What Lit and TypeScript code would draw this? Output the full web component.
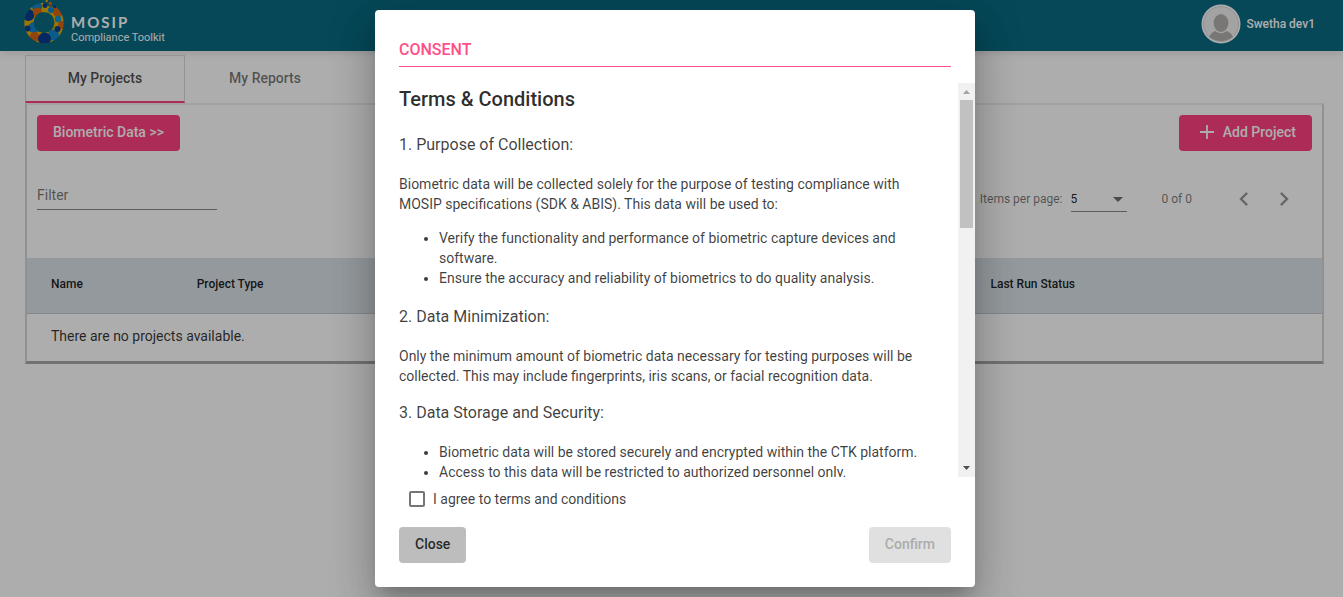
import { LitElement, html, css, svg } from "lit";
import { customElement, state } from "lit/decorators.js";

@customElement("mosip-logo")
class MosipLogo extends LitElement {
  static styles = css`
    :host { display: block; }
    svg { display: block; }
  `;
  render() {
    const blobs: [number, number, number, string][] = [
      [13, 6.5, 5, "#0f86cc"],
      [4.5, 15, 6, "#0b3d91"],
      [13.5, 12, 4.5, "#d9650f"],
      [34, 12, 5, "#d9650f"],
      [38, 25, 4, "#d9650f"],
      [34, 19, 3.2, "#0f95d6"],
      [27, 10, 3, "#0f86cc"],
      [10, 27.5, 5.5, "#0f86cc"],
      [3.5, 28.5, 3, "#0b3d91"],
      [10.5, 37, 5, "#d9650f"],
      [29.5, 35, 5.5, "#0f86cc"],
      [33.5, 29, 3, "#0b3d91"],
      [20.5, 39, 6.5, "#0b3d91"],
    ];
    const sparks: [number, number, number, string][] = [
      [21, 5.7, 2.4, "#0b3d91"],
      [26.3, 3.6, 1.8, "#d9650f"],
      [22.7, 1, 1.2, "#e6b000"],
      [30.5, 6.7, 1.6, "#0b3d91"],
    ];
    const dot = ([x, y, r, c]: [number, number, number, string]) =>
      svg`<circle cx=${x} cy=${y} r=${r} fill=${c}></circle>`;
    return html`<svg width="42" height="46" viewBox="0 0 42 46" aria-hidden="true">
      <defs>
        <mask id="ring">
          <ellipse cx="20" cy="23" rx="19.7" ry="20.3" fill="#fff"></ellipse>
          <circle cx="20" cy="22.500" r="10.500" fill="#000"></circle>
          <path d="M18 0h14v3l-4 4-4-1-4-2z" fill="#000"></path>
        </mask>
      </defs>
      <g mask="url(#ring)">
        <rect width="42" height="46" fill="#e6b000"></rect>
        ${blobs.map(dot)}
      </g>
      ${sparks.map(dot)}
    </svg>`;
  }
}

@customElement("app-root")
class AppRoot extends LitElement {
  @state() private agreed = false;

  static styles = css`
    :host {
      display: block;
      min-height: 100vh;
      position: relative;
      background: #fff;
      font-family: Roboto, sans-serif;
      font-size: 14px;
      color: rgba(0, 0, 0, 0.87);
    }
    * { box-sizing: border-box; }
    button, input, select { font-family: inherit; }
    header {
      display: flex;
      justify-content: space-between;
      height: 51px;
      padding: 0 28px 0 24px;
      background: #0a6a82;
      color: #fff;
      box-shadow: 0 2px 8px rgba(0, 0, 0, 0.12);
    }
    .brand { display: flex; gap: 5px; }
    .brand-text { padding-top: 14px; }
    .brand-name { font: 700 15px/17px Lato, sans-serif; letter-spacing: 2px; }
    .brand-sub { font-size: 11px; line-height: 14px; }
    .user { display: flex; align-items: center; gap: 5px; height: 48px; font-size: 12px; font-weight: 500; }
    .user svg { display: block; }
    main { padding: 4px 19px 0 25px; }
    .tabs { display: flex; height: 48px; }
    .tab {
      width: 160px;
      border: 1px solid transparent;
      border-bottom: 2px solid transparent;
      background: none;
      padding: 0 0 2px;
      font-size: 14px;
      font-weight: 500;
      color: rgba(0, 0, 0, 0.54);
    }
    .tab.active { border-color: #d9d9d9; border-bottom-color: #ff4081; color: rgba(0, 0, 0, 0.7); }
    .panel {
      border: 2px solid #e4e4e4;
      border-top-color: #ededed;
      border-bottom: 3px solid #a8a8a8;
      border-left-color: #d6d6d6;
      border-right-color: #d6d6d6;
    }
    .row { display: flex; justify-content: space-between; padding: 0 10px; }
    .actions { padding-top: 10px; }
    .btn {
      display: flex;
      align-items: center;
      height: 36px;
      padding: 0 16px 2px;
      border: 0;
      border-radius: 4px;
      font-size: 14px;
      font-weight: 500;
    }
    .primary { background: #ff4081; color: #fff; }
    .add { gap: 8px; padding-left: 20px; }
    .tools { height: 107px; }
    .filter {
      width: 180px;
      height: 29px;
      margin-top: 30px;
      padding: 0;
      border: 0;
      border-bottom: 1px solid #8a8a8a;
      background: none;
      font-size: 14px;
      outline: 0;
    }
    .filter::placeholder { color: rgba(0, 0, 0, 0.54); }
    .pager { display: flex; align-items: center; height: 40px; margin-top: 28px; padding-right: 8px; font-size: 12px; color: rgba(0, 0, 0, 0.54); }
    .size-box { display: grid; align-items: center; width: 56px; height: 24px; margin: 2px 35px 0 8px; border-bottom: 1px solid #8a8a8a; }
    .size-box > * { grid-area: 1 / 1; }
    .size-box select { appearance: none; border: 0; background: none; padding: 0 0 2px; font-size: 12px; color: rgba(0, 0, 0, 0.87); }
    .size-box svg { justify-self: end; margin-right: 4px; pointer-events: none; }
    .nav { display: flex; margin-left: 32px; }
    .nav button { width: 40px; height: 40px; padding: 6px; border: 0; background: none; color: rgba(0, 0, 0, 0.4); }
    .nav svg { display: block; }
    table { width: 100%; border-collapse: collapse; table-layout: fixed; }
    th { height: 55px; padding: 0 0 2px; text-align: left; font-size: 12px; font-weight: 500; background: #dae2e7; border-bottom: 1px solid #c3c9cf; }
    th:first-child, td:first-child { padding-left: 24px; }
    .c-name { width: 13.1%; }
    .c-type { width: 61.3%; }
    td { height: 48px; padding: 0 0 2px; color: rgba(0, 0, 0, 0.8); }
    .backdrop {
      position: absolute;
      inset: 0;
      display: flex;
      align-items: center;
      justify-content: center;
      padding-left: 7px;
      background: rgba(0, 0, 0, 0.32);
    }
    .dialog {
      width: 600px;
      padding: 24px;
      border-radius: 4px;
      background: #fff;
      box-shadow: 0 11px 15px -7px rgba(0, 0, 0, 0.2), 0 24px 38px 3px rgba(0, 0, 0, 0.14), 0 9px 46px 8px rgba(0, 0, 0, 0.12);
    }
    .title { margin: 0 0 16px; padding: 4px 0 5px; border-bottom: 1px solid #ff4f88; color: #ff4f88; font-size: 16px; line-height: 23px; font-weight: 500; }
    .scroller { display: flex; height: 394px; margin-right: -24px; }
    .terms { flex: 1; overflow: hidden; padding-right: 24px; line-height: 20px; color: rgba(0, 0, 0, 0.76); }
    .terms h2 { margin: 0 0 17px; font-size: 20px; line-height: 32px; font-weight: 500; color: rgba(0, 0, 0, 0.84); }
    .terms h3 { margin: 0 0 16px; font-size: 16px; line-height: 26px; font-weight: 400; }
    .terms p { margin: 0 0 14px; }
    .terms ul { margin: 0 0 16px; padding-left: 40px; }
    .bar { display: flex; flex-direction: column; justify-content: space-between; width: 17px; background: #f1f1f1; }
    .bar svg { display: block; }
    .thumb { flex: 1; padding: 0 2px; }
    .thumb::before { content: ""; display: block; height: 128px; background: #c1c1c1; }
    .agree { display: flex; align-items: center; gap: 8px; height: 20px; margin: 12px 0 18px 10px; color: rgba(0, 0, 0, 0.76); }
    .agree input { appearance: none; width: 16px; height: 16px; margin: 0; border: 2px solid #757575; border-radius: 2px; }
    .agree input:checked { background: #ff4081; border-color: #ff4081; }
    .footer { display: flex; justify-content: space-between; }
    .close { background: #bdbdbd; color: rgba(0, 0, 0, 0.8); }
    .confirm { background: #ff4081; color: #fff; }
    .confirm:disabled { background: #e0e0e0; color: #acacac; }
  `;

  private toggle(e: Event) {
    this.agreed = (e.target as HTMLInputElement).checked;
  }

  render() {
    return html`
      <header>
        <div class="brand">
          <mosip-logo></mosip-logo>
          <div class="brand-text">
            <div class="brand-name">MOSIP</div>
            <div class="brand-sub">Compliance Toolkit</div>
          </div>
        </div>
        <div class="user">
          <svg width="40" height="40" viewBox="0 0 40 40" aria-hidden="true">
            <circle cx="20" cy="20" r="19.5" fill="#fff"></circle>
            <circle cx="20" cy="20" r="17.5" fill="#f0f0f0" stroke="#c4c4c4" stroke-width="0.6"></circle>
            <ellipse cx="20" cy="19" rx="7.4" ry="9" fill="#b3b0ae"></ellipse>
            <path d="M8 33C9.500 29.500 12 28 14.500 27Q20 31.500 25.500 27C28 28 30.500 29.500 32 33Q20 41 8 33Z" fill="#b3b0ae"></path>
          </svg>
          <span>Swetha dev1</span>
        </div>
      </header>
      <main>
        <nav class="tabs">
          <button class="tab active">My Projects</button>
          <button class="tab">My Reports</button>
        </nav>
        <section class="panel">
          <div class="row actions">
            <button class="btn primary">Biometric Data &gt;&gt;</button>
            <button class="btn primary add">
              <svg width="16" height="16" viewBox="0 0 16 16" aria-hidden="true"><path d="M8 1v14M1 8h14" stroke="currentColor" stroke-width="1.800"></path></svg>
              Add Project
            </button>
          </div>
          <div class="row tools">
            <input class="filter" placeholder="Filter" aria-label="Filter" />
            <div class="pager">
              <label for="size">Items per page:</label>
              <div class="size-box">
                <select id="size"><option>5</option></select>
                <svg width="10" height="5" viewBox="0 0 10 5" aria-hidden="true"><path d="M0 0h10L5 5z" fill="#6e6e6e"></path></svg>
              </div>
              <span>0 of 0</span>
              <div class="nav">
                <button aria-label="Previous page"><svg width="28" height="28" viewBox="0 0 24 24"><path d="M15.410 7.410L14 6l-6 6 6 6 1.410-1.410L10.830 12z" fill="currentColor"></path></svg></button>
                <button aria-label="Next page"><svg width="28" height="28" viewBox="0 0 24 24"><path d="M10 6L8.590 7.410 13.170 12l-4.580 4.590L10 18l6-6z" fill="currentColor"></path></svg></button>
              </div>
            </div>
          </div>
          <table>
            <thead>
              <tr><th class="c-name">Name</th><th class="c-type">Project Type</th><th>Last Run Status</th></tr>
            </thead>
            <tbody>
              <tr><td colspan="3">There are no projects available.</td></tr>
            </tbody>
          </table>
        </section>
      </main>
      <div class="backdrop">
        <div class="dialog" role="dialog" aria-modal="true" aria-labelledby="consent">
          <h1 class="title" id="consent">CONSENT</h1>
          <div class="scroller">
            <div class="terms">
              <h2>Terms &amp; Conditions</h2>
              <h3>1. Purpose of Collection:</h3>
              <p>Biometric data will be collected solely for the purpose of testing compliance with MOSIP specifications (SDK &amp; ABIS). This data will be used to:</p>
              <ul>
                <li>Verify the functionality and performance of biometric capture devices and software.</li>
                <li>Ensure the accuracy and reliability of biometrics to do quality analysis.</li>
              </ul>
              <h3>2. Data Minimization:</h3>
              <p>Only the minimum amount of biometric data necessary for testing purposes will be collected. This may include fingerprints, iris scans, or facial recognition data.</p>
              <h3>3. Data Storage and Security:</h3>
              <ul>
                <li>Biometric data will be stored securely and encrypted within the CTK platform.</li>
                <li>Access to this data will be restricted to authorized personnel only.</li>
              </ul>
            </div>
            <div class="bar" aria-hidden="true">
              <svg width="17" height="17" viewBox="0 0 17 17"><path d="M5 11h7L8.500 7z" fill="#a3a3a3"></path></svg>
              <div class="thumb"></div>
              <svg width="17" height="17" viewBox="0 0 17 17"><path d="M5 6h7l-3.500 4z" fill="#505050"></path></svg>
            </div>
          </div>
          <label class="agree">
            <input type="checkbox" .checked=${this.agreed} @change=${this.toggle} />
            I agree to terms and conditions
          </label>
          <div class="footer">
            <button class="btn close">Close</button>
            <button class="btn confirm" ?disabled=${!this.agreed}>Confirm</button>
          </div>
        </div>
      </div>
    `;
  }
}
